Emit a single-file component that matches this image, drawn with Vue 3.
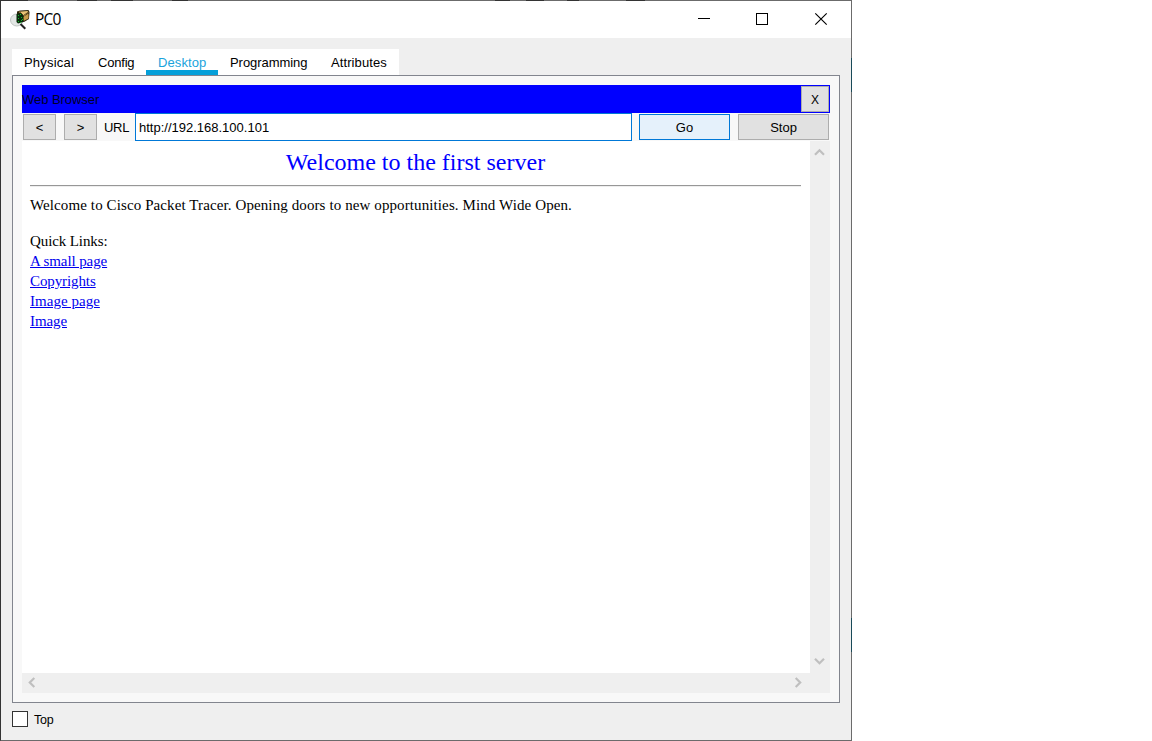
<script setup>
import { ref } from 'vue'

const tabs = [
  { name: 'Physical', width: 74, spacing: 0.2 },
  { name: 'Config', width: 60, spacing: -0.2 },
  { name: 'Desktop', width: 72, spacing: 0.1 },
  { name: 'Programming', width: 101, spacing: -0.05 },
  { name: 'Attributes', width: 80, spacing: 0.1 },
]
const active = ref('Desktop')
const url = ref('http://192.168.100.101')
const links = [
  { text: 'A small page', spacing: -0.1 },
  { text: 'Copyrights', spacing: -0.1 },
  { text: 'Image page', spacing: 0.03 },
  { text: 'Image', spacing: -0.1 },
]
</script>

<template>
  <div class="window">
    <header class="titlebar">
      <svg class="app-icon" width="22" height="22" viewBox="0 0 22 22">
        <ellipse cx="6.800" cy="10" rx="6.300" ry="6" fill="#e3e7e5" stroke="#bfc5c2" />
        <path d="M7 1.500L10 0.500L18.500 0L19.500 2L19 9L14 12L7 11Z" fill="#2c240c" />
        <path d="M8.500 1.800L17.500 1L18.500 2.500L14 6Z" fill="#e9c375" />
        <path d="M13 7L18.500 3.500V8.500L13.500 11Z" fill="#c99c4b" />
        <path d="M9.500 1.800L13.500 5.500L18.500 2" fill="none" stroke="#60491e" />
        <path d="M6.500 4L11 3L13.500 6V12L8 13.500L6.500 12Z" fill="#092b0b" />
        <path d="M8 5h1v1H8zM10 4h1v1h-1zM8 8h1v1H8zM11 7h1v1h-1zM8 11h1v1H8zM11 10h1v1h-1zM10 12h1v1h-1zM12 9h1v1h-1z" fill="#16b52b" />
        <path d="M10.500 14L15.300 18.800" stroke="#222" stroke-width="2" />
      </svg>
      <span class="title">PC0</span>
      <div class="controls">
        <svg width="58" height="38" shape-rendering="crispEdges"><path d="M26 18.5h12" stroke="#000" /></svg>
        <svg width="58" height="38" shape-rendering="crispEdges"><rect x="26.500" y="13.500" width="11" height="11" fill="none" stroke="#000" /></svg>
        <svg width="58" height="38"><path d="M27.300 13.300L38.700 24.700M38.700 13.300L27.300 24.700" stroke="#000" stroke-width="1.150" /></svg>
      </div>
    </header>

    <nav class="tabs">
      <button
        v-for="t in tabs"
        :key="t.name"
        class="tab"
        :class="{ active: t.name === active }"
        :style="{ width: t.width + 'px', letterSpacing: t.spacing + 'px' }"
        @click="active = t.name"
      >{{ t.name }}</button>
    </nav>

    <main class="panel">
      <div class="caption">
        <span class="caption-text">Web Browser</span>
        <button class="btn close">X</button>
      </div>
      <div class="toolbar">
        <button class="btn arrow">&lt;</button>
        <button class="btn arrow">&gt;</button>
        <label class="url-label" for="url">URL</label>
        <input id="url" v-model="url" class="url" spellcheck="false" />
        <button class="btn wide go">Go</button>
        <button class="btn wide">Stop</button>
      </div>
      <div class="view">
        <article class="page">
          <h1>Welcome to the first server</h1>
          <div class="rule"></div>
          <p class="intro">Welcome to Cisco Packet Tracer. Opening doors to new opportunities. Mind Wide Open.</p>
          <p class="heading">Quick Links:</p>
          <div v-for="l in links" :key="l.text" class="link">
            <a href="#" :style="{ letterSpacing: l.spacing + 'px' }">{{ l.text }}</a>
          </div>
        </article>
        <div class="vscroll">
          <svg width="20" height="20"><path d="M5 13.700L9.500 9.200L14 13.700" /></svg>
          <svg width="20" height="20"><path d="M5 5.800L9.500 10.300L14 5.800" /></svg>
        </div>
        <div class="hscroll">
          <svg width="20" height="20"><path d="M12.300 5L7.800 9.500L12.300 14" /></svg>
          <svg width="20" height="20"><path d="M5.700 5L10.200 9.500L5.700 14" /></svg>
        </div>
      </div>
    </main>

    <footer class="footer">
      <span class="check"></span>
      <span class="check-label">Top</span>
    </footer>
  </div>
</template>

<style>
body { background: #fff; }
</style>

<style scoped>
.window {
  position: relative;
  box-sizing: border-box;
  width: 852px;
  height: 741px;
  border: 1px solid #6b6b6b;
  border-left-color: #333;
  background: #efefef;
  color: #000;
  font: 13px/16px "Liberation Sans", Arial, sans-serif;
}
/* Darker stretches of the window frame */
.window::before {
  content: "";
  position: absolute;
  left: -1px;
  top: -1px;
  width: 852px;
  height: 1px;
  background:
    linear-gradient(#333, #333) 0 0 / 28px 1px no-repeat,
    linear-gradient(#333, #333) 77px 0 / 20px 1px no-repeat,
    linear-gradient(#333, #333) 111px 0 / 22px 1px no-repeat,
    linear-gradient(#333, #333) 172px 0 / 16px 1px no-repeat,
    linear-gradient(#333, #333) 495px 0 / 15px 1px no-repeat,
    linear-gradient(#333, #333) 526px 0 / 18px 1px no-repeat,
    linear-gradient(#333, #333) 567px 0 / 12px 1px no-repeat,
    linear-gradient(#333, #333) 626px 0 / 19px 1px no-repeat;
}
.window::after {
  content: "";
  position: absolute;
  right: -1px;
  top: -1px;
  width: 1px;
  height: 741px;
  background:
    linear-gradient(#194a59, #194a59) 0 58px / 1px 34px no-repeat,
    linear-gradient(#194a59, #194a59) 0 618px / 1px 34px no-repeat;
}
.titlebar {
  display: flex;
  height: 37px;
  background: #fff;
}
.app-icon { margin: 9px 0 0 9px; }
.title {
  margin: 7px 0 0 3px;
  font: 15.5px/22px "Open Sans", "Noto Sans", sans-serif;
  letter-spacing: -0.8px;
}
.controls { display: flex; margin-left: auto; margin-top: -1px; padding-right: 5px; height: 38px; }
.tabs {
  display: flex;
  width: 387px;
  height: 26px;
  margin: 11px 0 0 11px;
  background: #fff;
}
.tab {
  box-sizing: border-box;
  height: 26px;
  padding: 2px 0 0 12px;
  border: 0;
  background: #fff;
  font: inherit;
  text-align: left;
  white-space: nowrap;
  color: #000;
}
.tab.active {
  border-bottom: 5px solid #049fd9;
  padding-top: 6px;
  color: #1aa3dc;
}
.panel {
  box-sizing: border-box;
  width: 828px;
  height: 628px;
  margin-left: 11px;
  padding: 9px;
  border: 1px solid #82858e;
  background: #f8f8f8;
}
.caption {
  display: flex;
  box-sizing: border-box;
  justify-content: space-between;
  align-items: center;
  height: 28px;
  padding-right: 1px;
  background: #00f;
  color: #000028;
  letter-spacing: -0.05px;
}
.caption-text { padding-top: 2px; }
.btn {
  box-sizing: border-box;
  height: 26px;
  padding: 2px 0 0;
  border: 1px solid #adadad;
  background: #e1e1e1;
  color: #000;
  font: inherit;
  text-align: center;
}
.close { width: 28px; padding-top: 1px; font-size: 12px; }
.toolbar {
  display: flex;
  align-items: center;
  height: 28px;
  padding: 0 1px;
}
.arrow { flex: none; width: 33px; margin-right: 8px; }
.url-label { flex: none; width: 31px; margin-left: -1px; padding-top: 1px; letter-spacing: -0.3px; }
.url {
  box-sizing: border-box;
  flex: none;
  width: 497px;
  height: 28px;
  margin-right: 7px;
  padding: 0 3px;
  border: 1px solid #0078d7;
  outline: 0;
  background: #fff;
  color: #000;
  font: inherit;
}
.wide { flex: none; width: 91px; }
.go { margin-right: 8px; border-color: #0078d7; background: #e5f1fb; }
.view {
  display: grid;
  grid-template-columns: 788px 20px;
  grid-template-rows: 532px 20px;
  background: #efefef;
}
.page {
  padding: 7px 9px 0 8px;
  background: #fff;
  font: 15px/20px "Liberation Serif", "Times New Roman", serif;
}
h1 {
  margin: 0;
  height: 37px;
  font-size: 24px;
  line-height: 28px;
  font-weight: 400;
  text-align: center;
  color: #00f;
}
.rule {
  height: 1px;
  border-top: 1px solid #979797;
  background: #eee;
  margin-bottom: 8px;
}
p { margin: 0; white-space: nowrap; }
.intro { height: 36px; letter-spacing: 0.105px; }
.heading { letter-spacing: -0.1px; }
.link a { color: #00e; text-decoration: underline; }
.vscroll { display: flex; flex-direction: column; justify-content: space-between; }
.hscroll { display: flex; justify-content: space-between; width: 788px; }
.vscroll path, .hscroll path { fill: none; stroke: #bfbfbf; stroke-width: 2.2; }
.footer {
  display: flex;
  align-items: center;
  gap: 6px;
  height: 16px;
  margin: 8px 0 0 11px;
  font-size: 12.5px;
}
.check {
  box-sizing: border-box;
  width: 16px;
  height: 16px;
  border: 1px solid #333;
  background: #fff;
}
.check-label { padding-top: 2px; letter-spacing: -0.2px; }
</style>
